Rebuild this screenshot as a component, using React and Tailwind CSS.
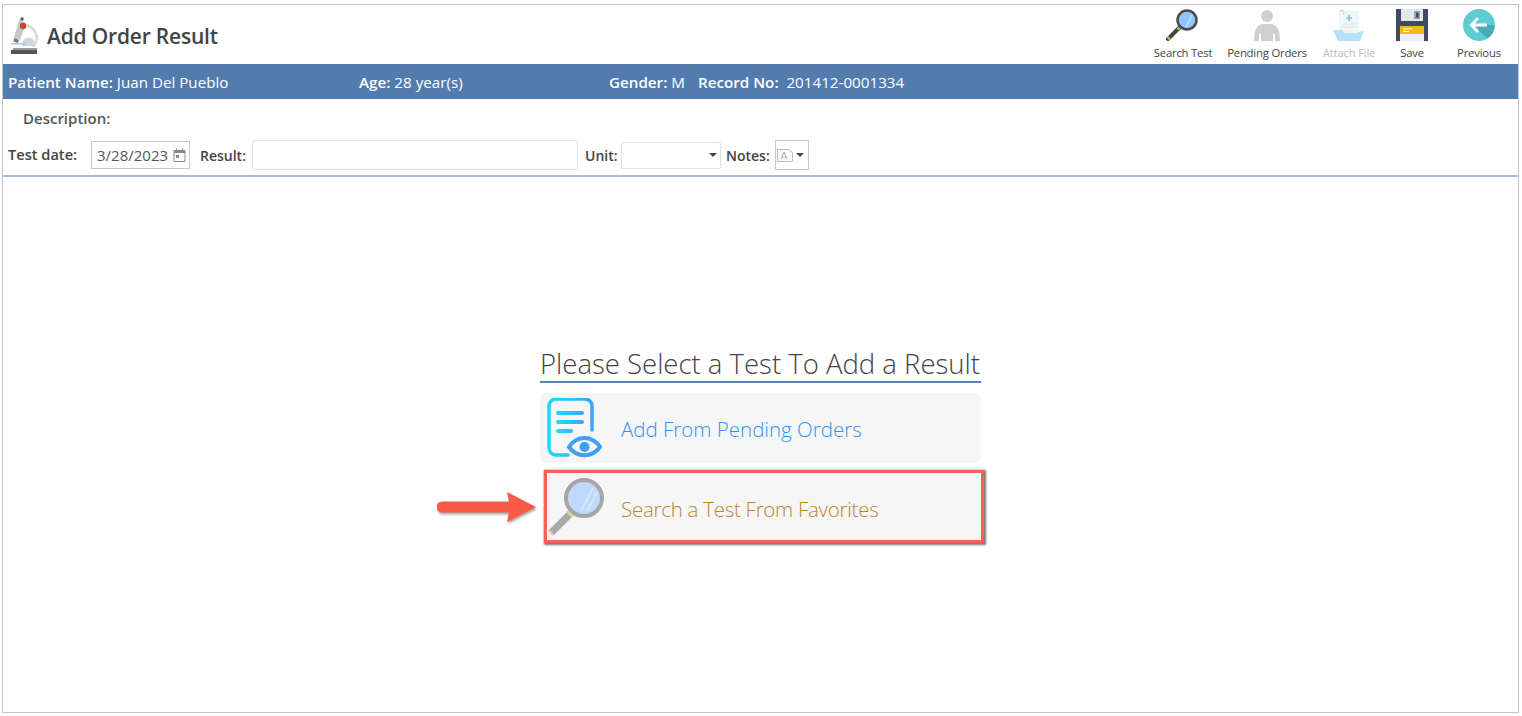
const FONT = "font-['Open_Sans','Noto_Sans',sans-serif]";

function MicroscopeIcon() {
    return (
        <svg width="28" height="40" viewBox="0 0 28 40">
            <path d="M14 10 a13 13 0 0 1 9 22" fill="none" stroke="#d9d9d9" strokeWidth="2.5" />
            <path d="M12 31 h13 v-2 a6 6 0 0 0 -13 0z" fill="#d5d5d5" />
            <rect x="1" y="28" width="15" height="1.5" fill="#9fd0f0" />
            <path d="M11 2 l3 1 -1 3 -3 -1z" fill="#666" />
            <path d="M9 5 l7 3 -6 17 -6 -2z" fill="#c8c8c8" />
            <circle cx="13" cy="11" r="3.2" fill="#c0492f" />
            <path d="M4 23 l5 2 -1.4 3 -4 -1.5z" fill="#777" />
            <rect x="3" y="33" width="24" height="2" fill="#999" />
            <rect x="1" y="35" width="26" height="4" fill="#555" />
        </svg>
    );
}

function SearchIcon() {
    return (
        <svg width="34" height="32" viewBox="0 0 34 32">
            <path d="M2 30 l11 -11" stroke="#444" strokeWidth="4" strokeLinecap="round" />
            <path d="M2 30 l1.5 -1.5" stroke="#a9c95d" strokeWidth="4" />
            <path d="M11.5 20.5 l2 -2" stroke="#a9c95d" strokeWidth="2.5" />
            <circle cx="21" cy="11" r="9.5" fill="#8ec5fb" stroke="#4a4a4a" strokeWidth="2.5" />
            <path d="M20 18 l6 -12" stroke="#b7dcfd" strokeWidth="2" />
        </svg>
    );
}

function PersonIcon() {
    return (
        <svg width="28" height="32" viewBox="0 0 28 32">
            <circle cx="14" cy="7" r="6" fill="#cfcfcf" />
            <path d="M1 32 c0 -10 2 -15 8 -17 h10 c6 2 8 7 8 17 h-5 v-7 h-2 v7 h-12 v-7 h-2 v7z" fill="#cfcfcf" />
        </svg>
    );
}

function AttachIcon() {
    return (
        <svg width="32" height="32" viewBox="0 0 32 32">
            <path d="M6 2 h20 v22 h-20z" fill="#f1f5f7" />
            <path d="M7 3 a2 2 0 1 1 3 2" fill="none" stroke="#a8d6f0" strokeWidth="1.2" />
            <path d="M13 9 h6 M16 6 v6" stroke="#8cc8ea" strokeWidth="2" />
            <path d="M9 15 h15 M9 18 h15" stroke="#dde3e6" strokeWidth="1" />
            <path d="M0 21 h9 l3 3 h12 l7 -3 -4 11 h-22z" fill="#b5e0f5" />
        </svg>
    );
}

function SaveIcon() {
    return (
        <svg width="32" height="32" viewBox="0 0 32 32">
            <rect width="32" height="32" fill="#3f4a63" />
            <rect x="5" width="22" height="12" fill="#e3e7e7" />
            <rect x="18" y="2" width="6" height="8" fill="#9aa1ad" />
            <rect x="20" y="3.5" width="2.5" height="5" fill="#3f4a63" />
            <rect x="4" y="17" width="24" height="15" fill="#e9eeee" />
            <rect x="4" y="17" width="24" height="8" fill="#f0b91d" />
            <path d="M7 20 h9 M7 22.5 h6" stroke="#fff" strokeWidth="1" />
        </svg>
    );
}

function BackIcon() {
    return (
        <svg width="32" height="32" viewBox="0 0 32 32">
            <circle cx="16" cy="16" r="16" fill="#5fcbd3" />
            <path d="M9 16 h22.500 a16 16 0 0 1 -7 13.500z" fill="#4aabb6" />
            <path d="M15 9 l-6.500 7 6.500 7 M9 16 h15" fill="none" stroke="#fff" strokeWidth="3" />
        </svg>
    );
}

function CalendarIcon() {
    return (
        <svg width="13" height="14" viewBox="0 0 13 14" className="ml-[5px]">
            <path d="M1 2.500 h11 v11 h-11z" fill="none" stroke="#888" />
            <path d="M1 2.500 h11 v2.500 h-11z" fill="#888" />
            <path d="M3.500 0.500 v2 M9.500 0.500 v2" stroke="#888" />
            <rect x="3" y="7" width="3" height="3" fill="#888" />
        </svg>
    );
}

function NotesGlyph() {
    return (
        <svg width="16" height="13" viewBox="0 0 16 13">
            <path d="M0.500 0.500 h11 l4 3 v9 h-15z" fill="#fff" stroke="#bbb" />
            <path d="M4 10 l3 -7 3 7 M5 8 h4" fill="none" stroke="#aaa" />
        </svg>
    );
}

function PendingDocIcon() {
    return (
        <svg width="56" height="60" viewBox="0 0 56 60">
            <defs>
                <linearGradient id="docGrad" x1="0" y1="0" x2="1" y2="0">
                    <stop offset="0" stopColor="#1fd7ff" />
                    <stop offset="1" stopColor="#3aa6ff" />
                </linearGradient>
            </defs>
            <path d="M22 57 H10 a7 7 0 0 1 -7 -7 V8 a7 7 0 0 1 7 -7 H39 a7 7 0 0 1 7 7 V32" fill="none" stroke="url(#docGrad)" strokeWidth="3.500" strokeLinecap="round" />
            <path d="M12 15 H36 M12 24 H36 M12 33 H25" stroke="url(#docGrad)" strokeWidth="4" strokeLinecap="round" />
            <path d="M23 49 C31 37 46 37 54 49 C46 60 31 60 23 49z" fill="#f6f6f6" stroke="#3f9ff5" strokeWidth="4" />
            <circle cx="38.500" cy="49" r="5" fill="#3f9ff5" />
        </svg>
    );
}

function FavSearchIcon() {
    return (
        <svg width="60" height="60" viewBox="0 0 60 60">
            <path d="M4 56 L23 37" stroke="#a8a8a8" strokeWidth="7" />
            <path d="M2.500 54 L6 58" stroke="#cfdc9e" strokeWidth="2" />
            <path d="M20 34 L26 40" stroke="#cfdc9e" strokeWidth="3" />
            <circle cx="37" cy="21" r="18" fill="#bdd9fb" stroke="#a6a6a6" strokeWidth="4" />
            <path d="M34 34 L46 11 M40 34 L50 16" stroke="#d5e7fc" strokeWidth="2" />
        </svg>
    );
}

function ArrowIcon() {
    return (
        <svg width="104" height="36" viewBox="0 0 104 36" className="drop-shadow-[1px_2px_1px_rgba(0,0,0,0.35)]">
            <path d="M5 11.500 H72 L70 2 L99 17 L70 32 L72 22.500 H5 a5.500 5.500 0 0 1 0 -11z" fill="#fb5a49" />
        </svg>
    );
}

const TOOLS = [
    { label: "Search Test", icon: <SearchIcon />, w: "w-[74px]" },
    { label: "Pending Orders", icon: <PersonIcon />, w: "w-[94px]" },
    { label: "Attach File", icon: <AttachIcon />, w: "w-[70px]", off: true },
    { label: "Save", icon: <SaveIcon />, w: "w-[56px]" },
    { label: "Previous", icon: <BackIcon />, w: "w-[78px]" },
];

export default function App() {
    return (
        <div className={`h-[716px] w-[1522px] overflow-hidden bg-white pt-1 pr-[3px] pb-[3px] pl-[2px] text-[#444] ${FONT}`}>
            <div className="flex h-full flex-col border border-[#c4c4c4]">
                {/* header */}
                <div className="flex h-[59px] items-start justify-between">
                    <div className="flex items-center gap-[9px] pt-[10px] pl-[7px]">
                        <MicroscopeIcon />
                        <h1 className="pt-[3px] text-[21px] font-semibold tracking-[-0.2px] text-[#444]">Add Order Result</h1>
                    </div>
                    <div className="flex pt-[4px]">
                        {TOOLS.map(t => (
                            <div key={t.label} className={`flex flex-col items-center ${t.w}`}>
                                <div className="flex h-[32px] items-center">{t.icon}</div>
                                <span className={`mt-[4px] text-[11.300px] tracking-[-0.2px] whitespace-nowrap ${t.off ? "text-[#bbb]" : "text-[#444]"}`}>{t.label}</span>
                            </div>
                        ))}
                    </div>
                </div>

                {/* patient bar */}
                <div className="flex h-[35px] items-center bg-[#527bae] pt-[2px] pl-[5px] text-[15.200px] text-white">
                    <span className="w-[351px]"><b className="font-semibold">Patient Name:</b> Juan Del Pueblo</span>
                    <span className="w-[250px]"><b className="font-semibold">Age:</b> 28 year(s)</span>
                    <span className="w-[89px]"><b className="font-semibold">Gender:</b> M</span>
                    <span><b className="font-semibold">Record No:</b>&nbsp; 201412-0001334</span>
                </div>

                {/* form */}
                <div className="flex h-[78px] flex-col border-b-2 border-[#a3bcdb] text-[15px]">
                    <div className="h-[41px] pt-[8px] pl-[20px] font-semibold text-[#555]">Description:</div>
                    <div className="flex items-center pl-[5px]">
                        <span className="w-[83px] text-[14.600px] font-semibold">Test date:</span>
                        <div className="flex h-[28px] w-[99px] items-center border border-[#c8c8c8] pl-[5px] text-[#555]">
                            3/28/2023
                            <CalendarIcon />
                        </div>
                        <span className="ml-[10px] w-[52px] text-[14px] font-semibold">Result:</span>
                        <div className="h-[30px] w-[326px] rounded-[2px] border border-[#e2e2e2]"></div>
                        <span className="ml-[7px] w-[36px] text-[14px] font-semibold">Unit:</span>
                        <div className="flex h-[27px] w-[100px] items-center justify-end rounded-[2px] border border-[#e0e0e0] pr-[3px]">
                            <span className="border-x-[4px] border-t-[4px] border-x-transparent border-t-[#444]"></span>
                        </div>
                        <span className="ml-[5px] w-[49px] text-[14px] font-semibold">Notes:</span>
                        <div className="flex h-[30px] w-[34px] items-center gap-[3px] border border-[#c8c8c8] pl-[1px]">
                            <NotesGlyph />
                            <span className="border-x-[4px] border-t-[4px] border-x-transparent border-t-[#444]"></span>
                        </div>
                    </div>
                </div>

                {/* empty state */}
                <div className="flex flex-1 flex-col items-center pt-[167px]">
                    <div className="w-[441px]">
                        <div className="h-[39px] border-b-2 border-[#5580b8] text-[27.500px] leading-[40px] font-light whitespace-nowrap text-[#444]">
                            Please Select a Test To Add a Result
                        </div>
                        <div className="mt-[10px] flex h-[70px] items-center rounded-[6px] bg-[#f6f6f6] pl-[6px]">
                            <PendingDocIcon />
                            <span className="mt-[2px] ml-[19px] text-[20.500px] font-light text-[#2f93fb]">Add From Pending Orders</span>
                        </div>
                        <div className="relative mt-[7px] ml-[4px] flex h-[73px] w-[440px] items-center border-[3px] border-[#f8604f] bg-[#f6f6f6] shadow-[1px_1px_2px_1px_rgba(0,0,0,0.55)]">
                            <FavSearchIcon />
                            <span className="mt-[6px] ml-[14px] text-[20.500px] font-light tracking-[-0.27px] text-[#b8861f]">Search a Test From Favorites</span>
                            <div className="absolute top-[17px] left-[-110px]"><ArrowIcon /></div>
                        </div>
                    </div>
                </div>
            </div>
        </div>
    );
}
